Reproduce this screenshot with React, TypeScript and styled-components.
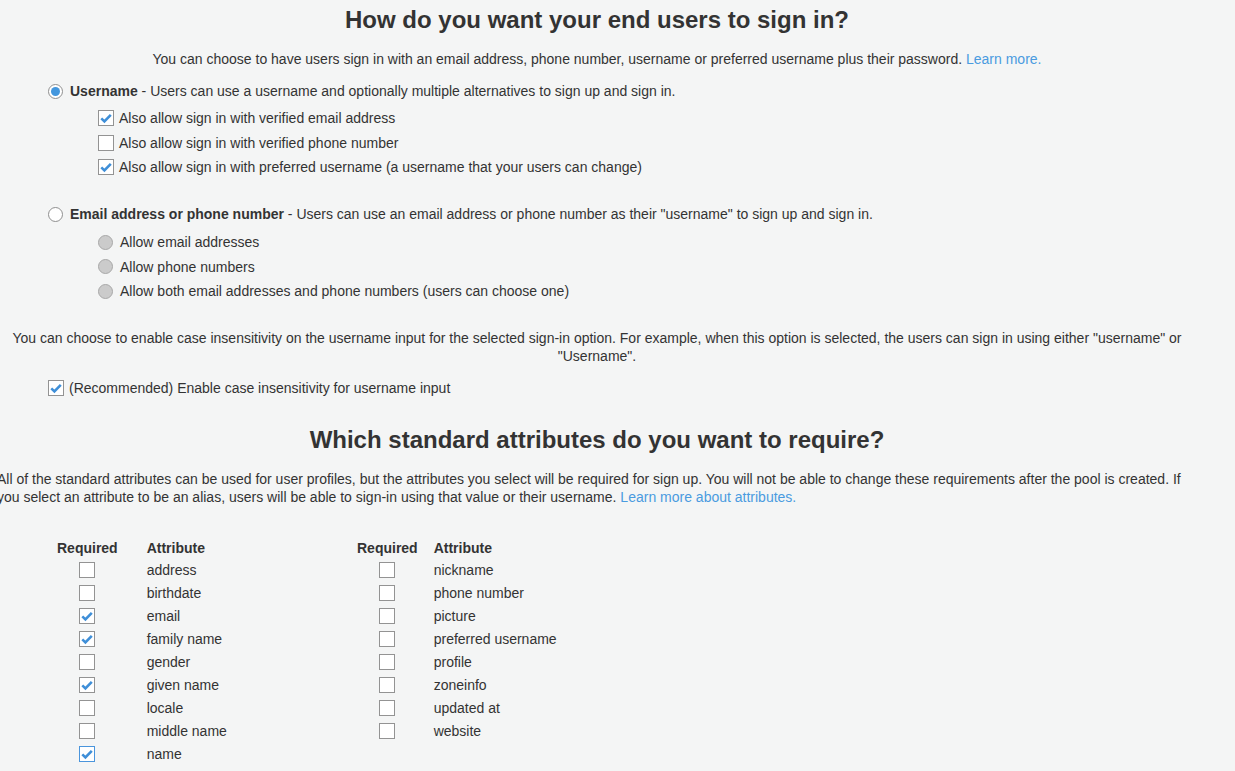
import React from "react";
import styled, { createGlobalStyle, css } from "styled-components";

const Global = createGlobalStyle`
  html, body { margin: 0; padding: 0; background: #f4f5f5; }
  body {
    font-family: "Liberation Sans", Arial, sans-serif;
    font-size: 14px;
    color: #333;
    overflow: hidden;
  }
`;

const Page = styled.div`
  width: 1200px;
  margin-left: -3px;
  padding-top: 7px;
  line-height: 18px;
`;

const Heading = styled.h2<{ $mt: number }>`
  margin: ${(p) => p.$mt}px 0 0;
  font-size: 24px;
  line-height: 26px;
  font-weight: bold;
  text-align: center;
  color: #333;
`;

const Para = styled.p<{ $mt: number; $center?: boolean }>`
  margin: ${(p) => p.$mt}px 0 0;
  text-align: ${(p) => (p.$center ? "center" : "left")};
`;

const Link = styled.a`
  color: #4a9be0;
  text-decoration: none;
`;

const Indent = styled.div<{ $mt: number; $left: number; $gap?: number }>`
  margin-top: ${(p) => p.$mt}px;
  padding-left: ${(p) => p.$left}px;
  display: flex;
  flex-direction: column;
  gap: ${(p) => p.$gap ?? 0}px;
`;

const OptionRow = styled.label`
  display: flex;
  align-items: center;
  height: 18px;
  white-space: nowrap;
`;

const Strong = styled.b`
  font-weight: bold;
`;

const BoxEl = styled.span<{ $focus?: boolean }>`
  flex: none;
  box-sizing: border-box;
  width: 16px;
  height: 16px;
  border: 1px solid ${(p) => (p.$focus ? "#4a95dc" : "#939393")};
  background: #fff;
  display: inline-flex;
  align-items: center;
  justify-content: center;
`;

const RadioEl = styled.span<{ $state: "on" | "off" | "disabled" }>`
  flex: none;
  box-sizing: border-box;
  width: 15px;
  height: 15px;
  border-radius: 50%;
  display: inline-flex;
  align-items: center;
  justify-content: center;
  ${(p) =>
    p.$state === "disabled"
      ? css`
          background: #cbcbcb;
          border: 1px solid #a8a8a8;
        `
      : css`
          background: #fff;
          border: 1px solid #8f8f8f;
        `}
  &::after {
    content: "";
    display: ${(p) => (p.$state === "on" ? "block" : "none")};
    width: 9px;
    height: 9px;
    border-radius: 50%;
    background: #4397de;
  }
`;

const LabelText = styled.span<{ $gap: number }>`
  margin-left: ${(p) => p.$gap}px;
`;

function Check({ checked, focus }: { checked?: boolean; focus?: boolean }) {
  return (
    <BoxEl $focus={focus}>
      {checked && (
        <svg width="14" height="14" viewBox="0 0 14 14">
          <path
            d="M2.3 7.4 L5.4 10.4 L11.8 3.8"
            fill="none"
            stroke="#3f8fd8"
            strokeWidth="2.6"
            strokeLinecap="butt"
            strokeLinejoin="miter"
          />
        </svg>
      )}
    </BoxEl>
  );
}

function CheckOption({ checked, children }: { checked?: boolean; children: React.ReactNode }) {
  return (
    <OptionRow>
      <Check checked={checked} />
      <LabelText $gap={5}>{children}</LabelText>
    </OptionRow>
  );
}

function RadioOption({
  state,
  children,
}: {
  state: "on" | "off" | "disabled";
  children: React.ReactNode;
}) {
  return (
    <OptionRow>
      <RadioEl $state={state} />
      <LabelText $gap={7}>{children}</LabelText>
    </OptionRow>
  );
}

const Tables = styled.div`
  margin-top: 33px;
  padding-left: 60px;
  display: flex;
  align-items: flex-start;
`;

const TableSlot = styled.div<{ $width?: number }>`
  flex: none;
  ${(p) => (p.$width ? `width: ${p.$width}px;` : "")}
`;

const Table = styled.table`
  border-collapse: collapse;
`;

const HeadCell = styled.th<{ $pr?: number }>`
  padding: 0 ${(p) => p.$pr ?? 0}px 0 0;
  height: 22px;
  line-height: 18px;
  text-align: left;
  vertical-align: top;
  font-weight: bold;
  white-space: nowrap;
`;

const ReqCell = styled.td<{ $pr: number }>`
  padding: 0 ${(p) => p.$pr}px 0 0;
  height: 23px;
  text-align: center;
  vertical-align: top;
`;

const AttrCell = styled.td`
  padding: 0;
  height: 23px;
  vertical-align: top;
  line-height: 18px;
  white-space: nowrap;
`;

const CheckWrap = styled.div`
  height: 18px;
  display: flex;
  align-items: center;
  justify-content: center;
`;

type Attr = { name: string; checked?: boolean; focus?: boolean };

const left: Attr[] = [
  { name: "address" },
  { name: "birthdate" },
  { name: "email", checked: true },
  { name: "family name", checked: true },
  { name: "gender" },
  { name: "given name", checked: true },
  { name: "locale" },
  { name: "middle name" },
  { name: "name", checked: true, focus: true },
];

const right: Attr[] = [
  { name: "nickname" },
  { name: "phone number" },
  { name: "picture" },
  { name: "preferred username" },
  { name: "profile" },
  { name: "zoneinfo" },
  { name: "updated at" },
  { name: "website" },
];

function AttrTable({ rows, pr, width }: { rows: Attr[]; pr: number; width?: number }) {
  return (
    <TableSlot $width={width}>
      <Table>
        <thead>
          <tr>
            <HeadCell $pr={pr}>Required</HeadCell>
            <HeadCell>Attribute</HeadCell>
          </tr>
        </thead>
        <tbody>
          {rows.map((r) => (
            <tr key={r.name}>
              <ReqCell $pr={pr}>
                <CheckWrap>
                  <Check checked={r.checked} focus={r.focus} />
                </CheckWrap>
              </ReqCell>
              <AttrCell>{r.name}</AttrCell>
            </tr>
          ))}
        </tbody>
      </Table>
    </TableSlot>
  );
}

export default function App() {
  return (
    <>
      <Global />
      <Page>
        <Heading $mt={0}>How do you want your end users to sign in?</Heading>
        <Para $mt={17} $center>
          You can choose to have users sign in with an email address, phone number, username or
          preferred username plus their password. <Link href="#">Learn more.</Link>
        </Para>

        <Indent $mt={14} $left={51}>
          <RadioOption state="on">
            <Strong>Username</Strong>&nbsp;- Users can use a username and optionally multiple
            alternatives to sign up and sign in.
          </RadioOption>
        </Indent>
        <Indent $mt={9} $left={101} $gap={6.5}>
          <CheckOption checked>Also allow sign in with verified email address</CheckOption>
          <CheckOption>Also allow sign in with verified phone number</CheckOption>
          <CheckOption checked>
            Also allow sign in with preferred username (a username that your users can change)
          </CheckOption>
        </Indent>

        <Indent $mt={29} $left={51}>
          <RadioOption state="off">
            <Strong>Email address or phone number</Strong>&nbsp;- Users can use an email address or
            phone number as their "username" to sign up and sign in.
          </RadioOption>
        </Indent>
        <Indent $mt={10} $left={101} $gap={6.5}>
          <RadioOption state="disabled">Allow email addresses</RadioOption>
          <RadioOption state="disabled">Allow phone numbers</RadioOption>
          <RadioOption state="disabled">
            Allow both email addresses and phone numbers (users can choose one)
          </RadioOption>
        </Indent>

        <Para $mt={29} $center>
          You can choose to enable case insensitivity on the username input for the selected
          sign-in option. For example, when this option is selected, the users can sign in using
          either "username" or "Username".
        </Para>
        <Indent $mt={14} $left={51}>
          <CheckOption checked>(Recommended) Enable case insensitivity for username input</CheckOption>
        </Indent>

        <Heading $mt={30}>Which standard attributes do you want to require?</Heading>
        <Para $mt={17}>
          All of the standard attributes can be used for user profiles, but the attributes you
          select will be required for sign up. You will not be able to change these requirements
          after the pool is created. If you select an attribute to be an alias, users will be able
          to sign-in using that value or their username.{" "}
          <Link href="#">Learn more about attributes.</Link>
        </Para>

        <Tables>
          <AttrTable rows={left} pr={29} width={300} />
          <AttrTable rows={right} pr={16} />
        </Tables>
      </Page>
    </>
  );
}
